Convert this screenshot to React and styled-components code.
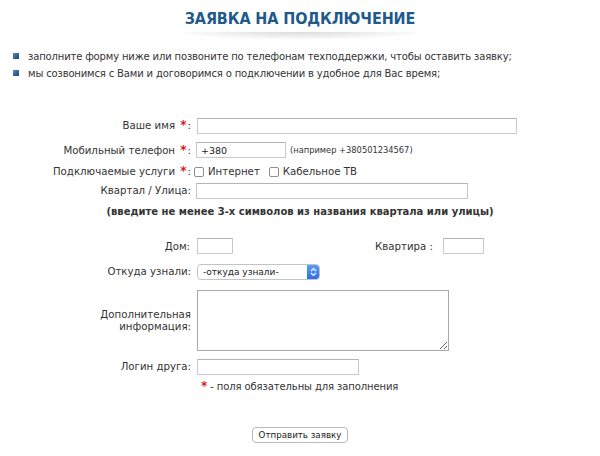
import React from 'react';
import styled, { createGlobalStyle } from 'styled-components';

const Global = createGlobalStyle`
  html, body { margin: 0; padding: 0; background: #fff; }
  body { font-family: "DejaVu Sans", Verdana, sans-serif; font-size: 10px; letter-spacing: -0.15px; color: #333; }
  * { box-sizing: border-box; }
`;

const Page = styled.div`
  width: 600px;
  height: 456px;
  overflow: hidden;
  display: flex;
  flex-direction: column;
`;

const TitleWrap = styled.div`
  display: flex;
  flex-direction: column;
  align-items: center;
  padding-top: 9px;
`;

const Title = styled.h1`
  margin: 0;
  font-family: "DejaVu Sans Condensed", "DejaVu Sans", sans-serif;
  font-stretch: condensed;
  font-size: 16px;
  line-height: 19px;
  font-weight: bold;
  color: #1f5a8c;
  letter-spacing: -0.1px;
`;

const TitleShadow = styled.div`
  width: 260px;
  height: 8px;
  margin-top: 4px;
  background: radial-gradient(ellipse at center top, rgba(0,0,0,0.14) 0%, rgba(0,0,0,0.05) 45%, rgba(0,0,0,0) 70%);
`;

const Bullets = styled.ul`
  list-style: none;
  margin: 9px 0 0 0;
  padding: 0 0 0 13px;
  display: flex;
  flex-direction: column;
  gap: 3px;
`;

const Bullet = styled.li`
  display: flex;
  align-items: center;
  gap: 9px;
  height: 14px;
  color: #333;
`;

const Square = styled.span`
  width: 6px;
  height: 6px;
  flex: none;
  background: linear-gradient(135deg, #5d8cc0 0%, #2c5f95 60%, #1e4c7c 100%);
`;

const Form = styled.form`
  display: flex;
  flex-direction: column;
  margin-top: 33px;
`;

const Row = styled.div`
  display: grid;
  grid-template-columns: 191px 1fr;
  column-gap: ${p => p.$gap ?? 6}px;
  align-items: center;
  height: ${p => p.$h}px;
`;

const Label = styled.label`
  text-align: right;
  color: #333;
  font-size: 10.2px;
  letter-spacing: 0;
  line-height: 12px;
  white-space: nowrap;
`;

const Star = styled.span`
  color: #e0141e;
  font-weight: bold;
  font-size: 12px;
  margin: 0 1px 0 2px;
`;

const Field = styled.div`
  display: flex;
  align-items: center;
  gap: 4px;
`;

const Input = styled.input`
  width: ${p => p.$w}px;
  height: 16px;
  border: 1px solid #c9c9c9;
  border-top-color: #b5b5b5;
  padding: 0 4px;
  font: inherit;
  font-size: 9.5px;
  color: #222;
  outline: none;
  margin: 0;
`;

const Hint = styled.span`
  font-size: 8.3px;
  letter-spacing: 0;
  color: #333;
`;

const Check = styled.input.attrs({ type: 'checkbox' })`
  width: 10px;
  height: 10px;
  margin: 0 4px 0 0;
  appearance: none;
  border: 1px solid #8e8e8e;
  border-radius: 2px;
  background: #fff;
`;

const CheckLabel = styled.label`
  display: flex;
  align-items: center;
  margin-right: 5px;
  font-size: 10.2px;
  letter-spacing: 0;
  color: #333;
`;

const Note = styled.div`
  text-align: center;
  font-weight: bold;
  letter-spacing: 0;
  color: #333;
  height: ${p => p.$h}px;
  line-height: ${p => p.$h}px;
`;

const HouseRow = styled.div`
  display: flex;
  align-items: center;
  height: 26px;
  margin-top: 10px;
`;

const HouseLabel = styled.label`
  width: ${p => p.$w}px;
  text-align: right;
  color: #333;
  font-size: 10.2px;
  letter-spacing: 0;
  margin-right: ${p => p.$mr}px;
`;

const SelectBox = styled.div`
  width: 123px;
  height: 16px;
  display: flex;
  align-items: stretch;
  border: 1px solid #c4c4c4;
  border-radius: 4px;
  overflow: hidden;
  background: #fff;
`;

const SelectText = styled.span`
  flex: 1;
  font-size: 9px;
  letter-spacing: 0;
  line-height: 14px;
  padding-left: 5px;
  color: #222;
`;

const Stepper = styled.span`
  width: 12px;
  display: flex;
  align-items: center;
  justify-content: center;
  background: linear-gradient(#5a9cf8, #2b6fe8);
`;

const Area = styled.textarea`
  width: 252px;
  height: 61px;
  border: 1px solid #a9a9a9;
  margin: 0;
  padding: 2px;
  font: inherit;
  resize: both;
  outline: none;
`;

const Required = styled.div`
  height: 16px;
  display: flex;
  align-items: center;
  padding-left: 199px;
  gap: 2px;
  font-size: 10px;
  letter-spacing: -0.1px;
  color: #333;
`;

const ButtonRow = styled.div`
  display: flex;
  justify-content: center;
  margin-top: 33px;
`;

const Button = styled.button`
  height: 16px;
  padding: 0 6px;
  font-family: inherit;
  font-size: 8.7px;
  letter-spacing: 0;
  color: #222;
  background: #fff;
  border: 1px solid #b8b8b8;
  border-radius: 4px;
  line-height: 14px;
`;

export default function App() {
  return (
    <Page>
      <Global />
      <TitleWrap>
        <Title>ЗАЯВКА НА ПОДКЛЮЧЕНИЕ</Title>
        <TitleShadow />
      </TitleWrap>
      <Bullets>
        <Bullet><Square />заполните форму ниже или позвоните по телефонам техподдержки, чтобы оставить заявку;</Bullet>
        <Bullet><Square />мы созвонимся с Вами и договоримся о подключении в удобное для Вас время;</Bullet>
      </Bullets>
      <Form onSubmit={e => e.preventDefault()}>
        <Row $h={25}>
          <Label>Ваше имя <Star>*</Star>:</Label>
          <Field><Input $w={320} /></Field>
        </Row>
        <Row $h={24} $gap={5}>
          <Label>Мобильный телефон <Star>*</Star>:</Label>
          <Field><Input $w={90} defaultValue="+380" /><Hint>(например +380501234567)</Hint></Field>
        </Row>
        <Row $h={19} $gap={3}>
          <Label>Подключаемые услуги <Star>*</Star>:</Label>
          <Field>
            <CheckLabel><Check />Интернет</CheckLabel>
            <CheckLabel><Check />Кабельное ТВ</CheckLabel>
          </Field>
        </Row>
        <Row $h={20} $gap={5}>
          <Label>Квартал / Улица:</Label>
          <Field><Input $w={272} /></Field>
        </Row>
        <Note $h={22}>(введите не менее 3-х символов из названия квартала или улицы)</Note>
        <HouseRow>
          <HouseLabel $w={190} $mr={7}>Дом:</HouseLabel>
          <Input $w={36} />
          <HouseLabel $w={200} $mr={10}>Квартира :</HouseLabel>
          <Input $w={41} />
        </HouseRow>
        <Row $h={26}>
          <Label>Откуда узнали:</Label>
          <Field>
            <SelectBox>
              <SelectText>-откуда узнали-</SelectText>
              <Stepper>
                <svg width="7" height="10" viewBox="0 0 7 10">
                  <path d="M1 4 L3.5 1.5 L6 4 M1 6 L3.5 8.5 L6 6" fill="none" stroke="#fff" strokeWidth="1.2" />
                </svg>
              </Stepper>
            </SelectBox>
          </Field>
        </Row>
        <Row $h={71}>
          <Label>Дополнительная<br />информация:</Label>
          <Field><Area /></Field>
        </Row>
        <Row $h={22}>
          <Label>Логин друга:</Label>
          <Field><Input $w={162} /></Field>
        </Row>
        <Required><Star>*</Star>- поля обязательны для заполнения</Required>
        <ButtonRow>
          <Button type="submit">Отправить заявку</Button>
        </ButtonRow>
      </Form>
    </Page>
  );
}
